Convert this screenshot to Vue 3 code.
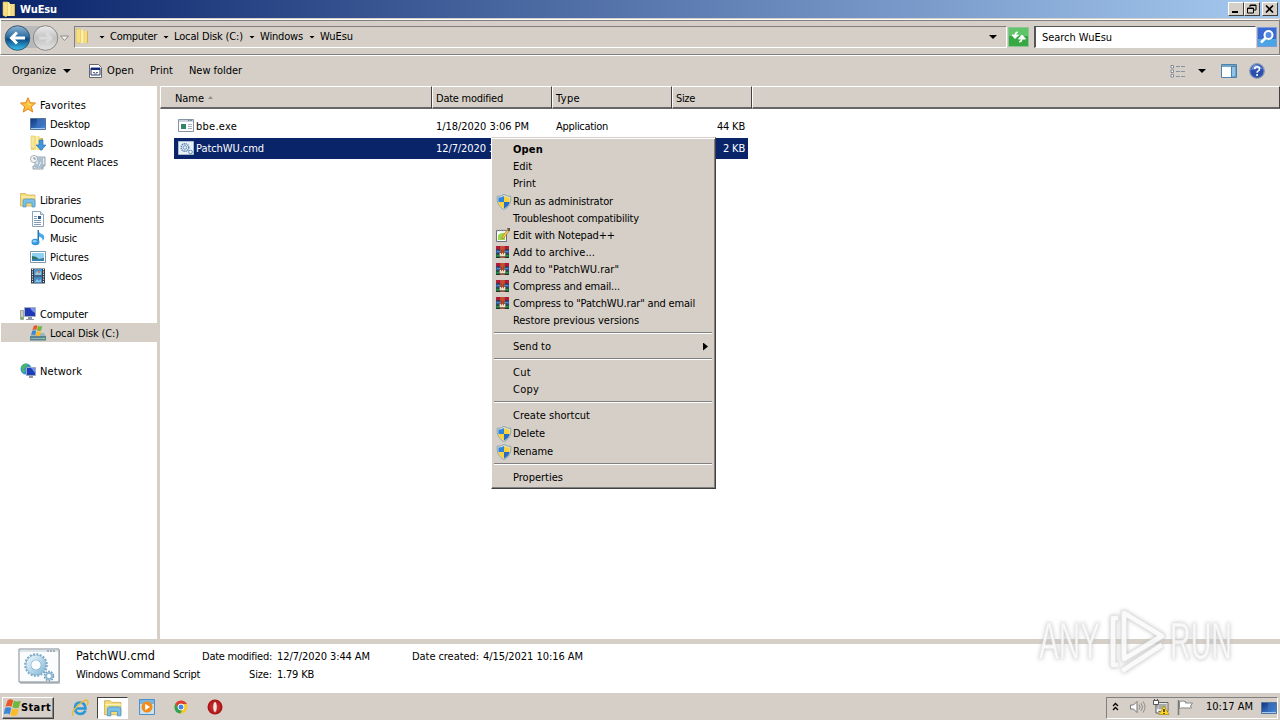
<script setup>
import { nextTick } from 'vue'

// Stretches or tightens a label so it occupies the given width.
const vFit = {
  mounted(el, { value }) {
    nextTick(() => {
      const n = el.textContent.length
      const w = el.getBoundingClientRect().width
      if (n > 1 && w) el.style.letterSpacing = (value - w) / n + 'px'
    })
  },
}

const crumbs = [
  ['Computer', 47], ['Local Disk (C:)', 69], ['Windows', 43], ['WuEsu', 33],
]
const tree = [
  { t: 'Favorites', w: 46, i: 'star' },
  { t: 'Desktop', w: 40, i: 'desktop', c: 1 },
  { t: 'Downloads', w: 53, i: 'down', c: 1 },
  { t: 'Recent Places', w: 68, i: 'recent', c: 1 },
  {},
  { t: 'Libraries', w: 41, i: 'lib' },
  { t: 'Documents', w: 54, i: 'doc', c: 1 },
  { t: 'Music', w: 27, i: 'music', c: 1 },
  { t: 'Pictures', w: 39, i: 'pic', c: 1 },
  { t: 'Videos', w: 32, i: 'video', c: 1 },
  {},
  { t: 'Computer', w: 48, i: 'pc' },
  { t: 'Local Disk (C:)', w: 69, i: 'disk', c: 1, sel: 1 },
  {},
  { t: 'Network', w: 42, i: 'net' },
]
const menu = [
  { t: 'Open', w: 30, b: 1 }, { t: 'Edit', w: 19 }, { t: 'Print', w: 23 },
  { t: 'Run as administrator', w: 100, i: 'shield', tall: 1 },
  { t: 'Troubleshoot compatibility', w: 126 },
  { t: 'Edit with Notepad++', w: 102, i: 'note' },
  { t: 'Add to archive...', w: 82, i: 'rar' },
  { t: 'Add to "PatchWU.rar"', w: 106, i: 'rar' },
  { t: 'Compress and email...', w: 107, i: 'rar' },
  { t: 'Compress to "PatchWU.rar" and email', w: 182, i: 'rar' },
  { t: 'Restore previous versions', w: 126 },
  {},
  { t: 'Send to', w: 38, sub: 1 },
  {},
  { t: 'Cut', w: 18 }, { t: 'Copy', w: 26 },
  {},
  { t: 'Create shortcut', w: 77 },
  { t: 'Delete', w: 32, i: 'shield', tall: 1 },
  { t: 'Rename', w: 40, i: 'shield', tall: 1 },
  {},
  { t: 'Properties', w: 50 },
]
</script>

<template>
  <div class="screen">
    <svg width="0" height="0" class="defs">
      <defs>
        <linearGradient id="gFold" x2="1"><stop offset="0" stop-color="#f0d070" /><stop offset=".5" stop-color="#fff3a8" /><stop offset="1" stop-color="#d8ac38" /></linearGradient>
        <linearGradient id="gBlue" x2="1" y2="1"><stop offset="0" stop-color="#10347c" /><stop offset="1" stop-color="#4a92e4" /></linearGradient>
        <linearGradient id="gBack" y2="1" x2="0"><stop offset="0" stop-color="#8db4d2" /><stop offset=".45" stop-color="#2d6ea4" /><stop offset=".55" stop-color="#0c4a86" /><stop offset="1" stop-color="#38c4f0" /></linearGradient>
        <linearGradient id="gFwd" y2="1" x2="0"><stop offset="0" stop-color="#ececec" /><stop offset=".5" stop-color="#c2c2c2" /><stop offset="1" stop-color="#e4e4e4" /></linearGradient>
        <linearGradient id="gGear" x2="1" y2="1"><stop offset="0" stop-color="#e3f2fa" /><stop offset="1" stop-color="#8ebedc" /></linearGradient>
        <radialGradient id="gRed"><stop offset="0" stop-color="#e84a42" /><stop offset="1" stop-color="#a80c10" /></radialGradient>
      </defs>
      <symbol id="folder" viewBox="0 0 16 16"><path d="M2 1h6l1 2h5v12H2z" fill="url(#gFold)" /><path d="M2 1h5v12l-2 3-3-2z" fill="#f6df83" stroke="#d9b850" stroke-width=".6" /><path d="M8 2v12M12 3v12" stroke="#fff6bd" /></symbol>
      <symbol id="star" viewBox="0 0 16 16"><path d="M8 .7l2.1 5 5.4.4-4.1 3.5 1.3 5.4L8 12l-4.7 3 1.3-5.4L.5 6.1l5.4-.4z" fill="#fcc23c" stroke="#e8801c" /><path d="M8 3.3L9.3 7l3 .2-4 1z" fill="#ffe48a" /></symbol>
      <symbol id="desktop" viewBox="0 0 16 16"><path d="M.5 2.500h15v11H.5z" fill="url(#gBlue)" stroke="#58749c" /><path d="M1 12.500h14" stroke="#9fc8f4" /><path d="M7 3h8v4q-5 0-8 4z" fill="#4a7cc8" opacity=".5" /></symbol>
      <symbol id="down" viewBox="0 0 16 16"><path d="M1 1h8l1 2h3v12H1z" fill="url(#gFold)" /><path d="M1 1h4v13l-4-1z" fill="#f8e69a" stroke="#d9b850" stroke-width=".5" /><path d="M9 5h4v5h3l-5 5.500-5-5.500h3z" fill="#3c96e0" stroke="#2670b0" stroke-width=".6" /></symbol>
      <symbol id="recent" viewBox="0 0 16 16"><path d="M5 3h10v9h-2v3H3v-3h2z" fill="#dfe8ee" stroke="#7d8b98" stroke-width=".8" /><path d="M8 5h5M8 7h5M8 9h2m1 0h2M6 11h3m1 0h4M5 13h8" stroke="#7898b4" /><circle cx="4" cy="5" r="3.600" fill="#edf3f7" stroke="#8c98a4" stroke-width=".7" /><path d="M4 3v2h2" fill="none" stroke="#666" stroke-width=".7" /></symbol>
      <symbol id="lib" viewBox="0 0 16 16"><path d="M.5 3V1.500h5L7 3h8v11H.5z" fill="#f5dc78" stroke="#c9a848" stroke-width=".7" /><path d="M1 5h14" stroke="#fff6c0" /><path d="M3 15V9q0-2 2-2h8q2 0 2 2v6h-3v-4H6v4z" fill="#79bfe8" stroke="#4a92c4" stroke-width=".7" /></symbol>
      <symbol id="doc" viewBox="0 0 16 16"><path d="M2.500.5h8l3 3v12h-11z" fill="#fff" stroke="#8ca4b8" /><path d="M10.500.5v3h3" fill="#d9e8f2" stroke="#8ca4b8" /><path d="M4 5.500h3M4 7.500h3M4 9.500h7M4 11.500h7M4 13.500h7" stroke="#829ab4" /><path d="M8 5h3v3H8z" fill="#315b94" /></symbol>
      <symbol id="music" viewBox="0 0 16 16"><path d="M8 0q1 3 4 4t2 5l-1.500 2q.5-4-4.500-4.500" fill="#4cabe8" /><path d="M7.500 0H9v12H7.500z" fill="#2676b8" /><ellipse cx="5.500" cy="12" rx="4" ry="3.300" fill="#3296dc" /><ellipse cx="4.700" cy="11.200" rx="2" ry="1.200" fill="#8fd2f8" /></symbol>
      <symbol id="pic" viewBox="0 0 16 16"><path d="M.5 2.500h15v11H.5z" fill="#fff" stroke="#8196a8" /><path d="M2 4h12v8H2z" fill="#8fd0f4" /><path d="M2 7q4 0 7 3l5-1v3H2z" fill="#2d7562" /><path d="M2 10h12v2H2z" fill="#3480b0" /></symbol>
      <symbol id="video" viewBox="0 0 16 16"><path d="M1 .5h14v15H1z" fill="#34404c" /><path d="M4 1h8v6.500H4z" fill="#4e94cc" /><path d="M4 8.500h8V15H4z" fill="#4788c0" /><path d="M5 6l2-3 2 2 2-2v4H5zM5 14l2-3 2 2 2-2v3z" fill="#8fc6e4" /><path d="M8 3h2v2H8z" fill="#d47854" /><path d="M2.500 1v14M13.500 1v14" stroke="#e2e8ee" stroke-dasharray="1.200 1.200" /></symbol>
      <symbol id="pc" viewBox="0 0 16 16"><path d="M.5 4.500h3v9h-3z" fill="#c4ceca" stroke="#8a968c" stroke-width=".8" /><path d="M1 11h2v2H1z" fill="#72b848" /><path d="M4.500 1.500h11v9h-11z" fill="#2038b8" stroke="#a8b0c0" /><path d="M10 2h5v5q-3-1-5-5z" fill="#7490ec" /><path d="M8 11h4v2h2v1H6v-1h2z" fill="#8d98a4" /></symbol>
      <symbol id="flag" viewBox="0 0 12 12"><path d="M2.500 1q2-1.500 4 0L5.300 5.500q-2-1-4.300 0z" fill="#ea5826" /><path d="M7 1.200q2 1 4.800 0L10.500 6Q8 7 6 5.800z" fill="#6eb83c" /><path d="M.8 6.300q2-1 4.300 0L4 11q-2-1.500-4.300 0z" fill="#3c86da" /><path d="M5.700 6.600q2 1.200 4.700.2L9.200 11.500q-2 1-4.700-.2z" fill="#fcbc28" /></symbol>
      <symbol id="disk" viewBox="0 0 16 16"><path d="M2 8h12l2 4v3H0v-3z" fill="#9db4be" /><path d="M0 11h16v4.500H0z" fill="#5b8390" /><path d="M1 13.500h13" stroke="#90b4bc" /><path d="M13 13h2v1h-2z" fill="#6f6" /><use href="#flag" x="1" y="0" width="12" height="11" /></symbol>
      <symbol id="net" viewBox="0 0 16 16"><circle cx="6" cy="6" r="5.500" fill="#3290d0" /><path d="M1 4q3-5 7-3L6 4 4 5l1 3-2 2zM8 3l3 2-2 2z" fill="#48b864" /><path d="M6.500 4.500h9v8h-9z" fill="#1c3cb8" stroke="#9aa8bc" /><path d="M11 5h4v5z" fill="#7094ec" /><path d="M9 13h4v2H9z" fill="#8d98a4" /></symbol>
      <symbol id="shield" viewBox="0 0 16 16"><path d="M8 .5q3 2 6.800 1.800 1 9.500-6.800 13.300Q.2 11.800 1.200 2.300 5 2.500 8 .5z" fill="#dbe8ee" stroke="#879ba6" stroke-width=".9" /><path d="M8 1.900Q5.500 3.500 2.400 3.500V8H8z" fill="#2d84d8" /><path d="M8 1.900q2.500 1.600 5.600 1.600V8H8z" fill="#f8d23c" /><path d="M2.400 8H8v6.400Q3.100 12.100 2.400 8z" fill="#f8d23c" /><path d="M13.600 8H8v6.400Q12.900 12.100 13.600 8z" fill="#2d6cc0" /></symbol>
      <symbol id="note" viewBox="0 0 14 14"><path d="M.5 2.500h10v11H.5z" fill="#fff" stroke="#687078" /><path d="M2 7q4-3 7-2v7H2z" fill="#9ed848" /><path d="M1 2.500h9" stroke="#889" stroke-dasharray="1 1" stroke-width="1.500" /><path d="M6 9l5-7 2 1-5 7-2 1z" fill="#f4c84c" stroke="#8a6020" stroke-width=".5" /><path d="M11 0h3v3h-2z" fill="#685848" /></symbol>
      <symbol id="rar" viewBox="0 0 14 13"><path d="M0 0h14v4H0z" fill="#b01838" /><path d="M0 4h14v4.500H0z" fill="#2858a4" /><path d="M0 8.500h14V13H0z" fill="#107038" /><path d="M0 4h14M0 8.500h14M0 12.500h14" stroke="#202020" stroke-width=".8" /><path d="M1 6h12" stroke="#5898d0" /><path d="M1 10.500h12" stroke="#38a858" /><path d="M4.500 0h5v13h-5z" fill="#c05030" /><path d="M3.500 7h7v4.500h-7z" fill="#ece0c8" stroke="#444" stroke-width=".7" /><path d="M5.500 4h1v5h-1zM7.500 4h1v5h-1z" fill="#b03818" /></symbol>
      <symbol id="gears" viewBox="0 0 40 34"><circle cx="17" cy="15" r="10.500" fill="none" stroke="#7ba9c6" stroke-width="2.600" stroke-dasharray="2 1.300" /><circle cx="17" cy="15" r="7.500" fill="none" stroke="#7ba9c6" stroke-width="5.500" /><circle cx="17" cy="15" r="7.500" fill="none" stroke="url(#gGear)" stroke-width="4.500" /><circle cx="30" cy="26" r="4.300" fill="none" stroke="#6c98b8" stroke-width="2" stroke-dasharray="1.600 1.100" /><circle cx="30" cy="26" r="3" fill="#fff" stroke="#92bbd4" stroke-width="2" /></symbol>
    </svg>

    <header class="title">
      <svg class="i16"><use href="#folder" /></svg>
      <b v-fit="37">WuEsu</b>
      <div class="winbtns">
        <i class="wb"><svg width="12" height="10"><path d="M2 8h6" stroke="#000" stroke-width="2" /></svg></i>
        <i class="wb"><svg width="12" height="10"><path d="M4 3V1h6v5H8M4 1.500h6M1.500 4v5h6V4zM1 4.500h7" fill="none" stroke="#000" /></svg></i>
        <i class="wb gap"><svg width="12" height="10"><path d="M2 1.500l7 7M9 1.500l-7 7" stroke="#000" stroke-width="1.700" /></svg></i>
      </div>
    </header>

    <nav class="nav">
      <svg class="arrows" width="70" height="30" viewBox="0 0 70 30">
        <path d="M16 3h30v22H16z" fill="#b7b9ba" />
        <circle cx="17.500" cy="15" r="12.300" fill="url(#gBack)" stroke="#3c5870" />
        <path d="M25 15H12M17 9.500L11.500 15l5.500 5.500" fill="none" stroke="#fff" stroke-width="3" />
        <circle cx="45.500" cy="15" r="12.300" fill="url(#gFwd)" stroke="#888" />
        <path d="M39 15h11M46 10l5 5-5 5" fill="none" stroke="#dadada" stroke-width="3" />
        <path d="M60.500 13h8L64.500 17.500z" fill="#f0efed" stroke="#8b8b88" />
      </svg>
      <div class="addr">
        <svg class="i16"><use href="#folder" /></svg>
        <template v-for="c in crumbs" :key="c[0]"><i class="tri" /><span v-fit="c[1]">{{ c[0] }}</span></template>
        <i class="tri big end" />
      </div>
      <svg class="refresh" width="21" height="20"><path d="M.5.5h20v19H.5z" fill="#38a844" stroke="#8fc49a" /><path d="M1 1h19v8H1z" fill="#60c468" /><path d="M10 5Q7 4.500 7 7.500V9M4 8l3 3.500L10.500 8zM11 15q3 .5 3-2.500V11M10.500 12L14 8l3.500 4z" fill="#fff" stroke="#fff" stroke-width="1" /></svg>
      <div class="search"><span v-fit="70">Search WuEsu</span></div>
      <svg class="mag" width="20" height="20"><path d="M.5.5h19v19H.5z" fill="#3a69d4" stroke="#7d9ad8" /><path d="M1 12h18v7H1z" fill="#4aa4e6" /><circle cx="11.500" cy="8" r="4" fill="#568be4" stroke="#fff" stroke-width="2" /><path d="M8.500 11L4 15.500" stroke="#fff" stroke-width="2.500" /></svg>
    </nav>

    <div class="tools">
      <span v-fit="44" class="t1">Organize</span><i class="tri big t2" />
      <svg class="t3" width="15" height="16"><path d="M1.500 1.500h9l3 3v10h-12z" fill="#fff" stroke="#666" /><path d="M3 5h9v7H3z" fill="#fff" stroke="#223a80" /><path d="M3 6h9" stroke="#102880" stroke-width="2" /><path d="M5 9.500h2M8 9.500h2M6 11h3" stroke="#667" /></svg>
      <span v-fit="27" class="t4">Open</span><span v-fit="23" class="t5">Print</span><span v-fit="53">New folder</span>
      <svg class="v1" width="16" height="13"><g fill="#fff" stroke="#777f90" stroke-width=".9"><path d="M1 .5h2.500V3H1zM1 5h2.500v2.500H1zM1 9.500h2.500V12H1z" /></g><path d="M6 1.500h9M6 6.500h9M6 11.500h9" stroke="#8a91a4" stroke-dasharray="4 1" /></svg>
      <i class="tri big v2" />
      <svg class="v3" width="16" height="14"><path d="M.5.5h15v13H.5z" fill="#fff" stroke="#4d81ac" /><path d="M1 2h14" stroke="#74a6cc" stroke-width="2" /><path d="M10.500 2.500h4.500V13h-4.500z" fill="#8dc4ea" stroke="#4d81ac" /></svg>
      <svg class="v4" width="16" height="16"><circle cx="8" cy="8" r="7.300" fill="#2a4fae" stroke="#8c98b8" stroke-width="1.300" /><path d="M2 7q2-6 6-5t6 4q-7-1-12 1z" fill="#6c92dc" /><path d="M5.700 6.200q0-2.400 2.400-2.400t2.400 2.100q0 1.300-1.300 2-1.100.6-1.100 1.900M8.100 11v2" fill="none" stroke="#fff" stroke-width="1.600" /></svg>
    </div>

    <main class="main">
      <aside class="tree">
        <div v-for="(n, k) in tree" :key="k" class="node" :class="{ child: n.c, sel: n.sel }">
          <template v-if="n.t"><svg class="i16"><use :href="'#' + n.i" /></svg><span v-fit="n.w">{{ n.t }}</span></template>
        </div>
      </aside>
      <section class="files">
        <div class="heads">
          <div class="h hn"><span v-fit="29">Name</span><i class="up" /></div>
          <div class="h hd"><span v-fit="67">Date modified</span></div>
          <div class="h ht"><span v-fit="24">Type</span></div>
          <div class="h hs"><span v-fit="19">Size</span></div>
          <div class="h hr" />
        </div>
        <div class="row">
          <svg class="i16" viewBox="0 0 16 16"><path d="M.5 1.500h15v12H.5z" fill="#fff" stroke="#8494a4" /><path d="M1 3h14" stroke="#cbd5df" stroke-width="2" /><path d="M10 2.500h4" stroke="#65788c" stroke-dasharray="1 .6" /><path d="M3 6h5v5H3z" fill="#338468" /><path d="M10 6.500h4M10 8.500h4M10 10.500h4" stroke="#a4b2bf" /></svg>
          <div class="cn"><span v-fit="41">bbe.exe</span></div><div class="cd"><span v-fit="93">1/18/2020 3:06 PM</span></div><div class="ct"><span v-fit="52">Application</span></div><div class="cs"><span v-fit="28">44 KB</span></div>
        </div>
        <div class="row on">
          <svg class="i16" viewBox="0 0 16 16"><path d="M.5 1.500h15v13H.5z" fill="#e8f1f8" stroke="#a9bdd0" /><circle cx="7" cy="7.500" r="3.800" fill="none" stroke="#5f87b4" stroke-width="1.500" stroke-dasharray="1.400 .6" /><circle cx="7" cy="7.500" r="1.800" fill="none" stroke="#6f94bc" /><circle cx="12.500" cy="12" r="1.800" fill="#fff" stroke="#5f87b4" /></svg>
          <div class="cn"><span v-fit="68">PatchWU.cmd</span></div><div class="cd"><span v-fit="93">12/7/2020 3:44 AM</span></div><div class="ct" /><div class="cs"><span v-fit="22">2 KB</span></div>
        </div>
      </section>
    </main>

    <footer class="details">
      <svg class="thumb" width="43" height="37" viewBox="0 0 43 37"><path d="M2 2h40v34H2z" fill="#c4c8cb" /><path d="M1 1h40v33H1z" fill="#fafcfd" stroke="#808b93" /><path d="M2 2h38v2H2z" fill="#dbe4e9" /><path d="M29 3h9" stroke="#778" stroke-dasharray="2 1" /><use href="#gears" x="1" y="2" width="40" height="34" /></svg>
      <div class="dname"><span v-fit="79" class="lg">PatchWU.cmd</span><span v-fit="124">Windows Command Script</span></div>
      <div class="dk"><span v-fit="70">Date modified:</span><span v-fit="23">Size:</span></div>
      <div class="dv"><span v-fit="93">12/7/2020 3:44 AM</span><span v-fit="37">1.79 KB</span></div>
      <div class="dk2"><span v-fit="67">Date created:</span></div>
      <div><span v-fit="100">4/15/2021 10:16 AM</span></div>
    </footer>

    <div class="task">
      <div class="start"><svg width="17" height="17" viewBox="0 0 12 12"><use href="#flag" width="12" height="12" /></svg><b v-fit="30">Start</b></div>
      <svg class="q1" width="18" height="18" viewBox="0 0 18 18"><path d="M14.500 11.500Q13 15 9 15q-5-.5-5-6t5-5.500q5 0 5.500 6H4.500" fill="none" stroke="#2898dc" stroke-width="2.600" /><path d="M2.500 16.500Q-1 14 7 6.500t9.500-4.500q1.500 1-.5 4" fill="none" stroke="#e8bc38" stroke-width="1.500" /></svg>
      <div class="active"><svg width="18" height="18"><use href="#lib" /></svg></div>
      <svg class="q3" width="16" height="16"><path d="M.5.500h15v15H.5z" fill="#c8e2f4" stroke="#4d91c8" /><path d="M1 1h14v4H1z" fill="#7ab4e0" /><circle cx="8" cy="8" r="5.500" fill="#f48a18" /><path d="M6.200 4.800L11 8l-4.800 3.200z" fill="#fff" /></svg>
      <svg class="q4" width="14" height="14" viewBox="0 0 14 14"><circle cx="7" cy="7" r="6.500" fill="#f8c828" /><path d="M1.300 3.500Q3.500.4 7 .5q4.200 0 5.900 3.500H7L4 8z" fill="#dc4034" /><path d="M1.300 3.500L5 9l3 1.500-1.500 3Q1 13 .5 8 .3 5 1.300 3.500z" fill="#34a050" /><circle cx="7" cy="7" r="3" fill="#4484e4" stroke="#fff" /></svg>
      <svg class="q5" width="16" height="16"><circle cx="8" cy="8" r="7.500" fill="url(#gRed)" /><ellipse cx="8" cy="8" rx="2.200" ry="5.500" fill="#f4e4e2" stroke="#88080c" stroke-width=".6" /></svg>
      <div class="tray">
        <svg class="y1" width="7" height="9"><path d="M1 4l2.500-2.500L6 4M1 8l2.500-2.500L6 8" fill="none" stroke="#000" stroke-width="1.300" /></svg>
        <svg class="y2" width="17" height="14"><path d="M1.500 5h3L8 1.500v11L4.500 9h-3z" fill="#fff" stroke="#777" /><path d="M10 4.500q2 2.500 0 5M12 3q3 4 0 8M14 1.500q4 5.500 0 11" fill="none" stroke="#888" stroke-width=".9" /></svg>
        <svg class="y3" width="17" height="17"><path d="M4 3.500h11v9H4z" fill="#e6e6e2" stroke="#666" /><path d="M5.500 5h8v5h-8z" fill="#a7aaa6" /><path d="M.5 1.500h5v4h-5zM1.500 0v2M4.500 0v2M3 6v8h3" fill="#fff" stroke="#555" /><path d="M11 7l5 8.500H6z" fill="#ffd820" stroke="#a88a00" stroke-width=".7" /><path d="M11 10v3M11 14v1" stroke="#000" stroke-width="1.200" /></svg>
        <svg class="y4" width="17" height="15"><path d="M1.500 0v15" stroke="#777" stroke-width="1.500" /><path d="M2.500 1.500q3-1 6 0v1.500h7l-2 3 1 2H8V8Q5 7.500 2.500 8.500z" fill="#fff" stroke="#888" /></svg>
        <span v-fit="47" class="clock">10:17 AM</span>
        <svg class="i16"><use href="#desktop" /></svg>
      </div>
    </div>

    <div class="ctx">
      <template v-for="(m, k) in menu" :key="k">
        <div v-if="m.t" class="mi" :class="{ tall: m.tall, bold: m.b }">
          <div class="mic"><svg v-if="m.i" :class="m.i"><use :href="'#' + m.i" /></svg></div>
          <span v-fit="m.w">{{ m.t }}</span><i v-if="m.sub" class="sub" />
        </div>
        <hr v-else>
      </template>
    </div>

    <svg class="mark" width="204" height="76" viewBox="0 0 204 76">
      <g class="brand">
        <text x="5" y="56" textLength="61" lengthAdjust="spacingAndGlyphs">ANY</text>
        <text x="136" y="56" textLength="62" lengthAdjust="spacingAndGlyphs">RUN</text>
      </g>
      <g class="play">
        <path d="M90 10L128 33 90 56zM84 15h-5v47h5M88 68l40-26" class="rim" />
        <path d="M90 10L128 33 90 56zM84 15h-5v47h5M88 68l40-26" />
      </g>
    </svg>
  </div>
</template>

<style>
html, body { margin: 0; overflow: hidden; }
</style>
<style scoped>
* { box-sizing: border-box; }
.screen { position: relative; width: 1280px; height: 720px; overflow: hidden; display: flex; flex-direction: column; background: #d5cfc7; color: #000; font: 11px/14px "DejaVu Sans Condensed", "DejaVu Sans", sans-serif; white-space: nowrap; }
.defs { position: absolute; }
svg { flex: none; display: block; }
span, b { display: inline-block; flex: none; }
.i16 { width: 16px; height: 16px; }
.title { height: 18px; flex: none; display: flex; align-items: center; padding-left: 1px; background: linear-gradient(90deg, #0a246a, #a6caf0); color: #fff; }
.title b { margin: 1px 0 0 3px; }
.winbtns { margin: 0 2px 0 auto; display: flex; }
.wb { width: 16px; height: 14px; background: #d5cfc7; border: 1px solid; border-color: #fff #404040 #404040 #fff; padding: 1px; }
.gap { margin-left: 2px; }
.nav { height: 36px; flex: none; display: flex; align-items: center; margin-top: 1px; border: 1px solid #808080; border-top-color: #fff; border-left-color: #fff; box-shadow: inset 0 1px #808080; }
.arrows { margin: 1px 0 0 -1px; }
.addr { width: 933px; height: 22px; margin-left: 4px; border: 1px solid #808080; border-right-color: #fff; border-bottom-color: #fff; display: flex; align-items: center; }
.addr .i16 { margin: -2px 0 0 -1px; }
.addr .tri { margin: 0 5px 0 6px; }
.addr .i16 + .tri { margin-left: 9px; }
.addr .tri.end { margin: 0 9px 0 auto; }
.tri { width: 6px; height: 3px; flex: none; background: #000; clip-path: polygon(0 0, 100% 0, 50% 100%); }
.big { width: 8px; height: 4px; }
.refresh { margin-left: 1px; }
.search { width: 222px; height: 22px; margin-left: 5px; background: #fff; border: 1px solid #fff; border-top-color: #555; border-left: 2px solid #555; padding: 4px 0 0 6px; }
.mag { margin-left: 1px; }
.tools { height: 31px; flex: none; display: flex; align-items: center; padding: 0 15px 0 12px; border-top: 1px solid #fff; }
.t2 { margin-left: 7px; }
.t3 { margin: -1px 0 0 17px; }
.t4 { margin-left: 4px; }
.t5 { margin: 0 16px; }
.v1 { margin-left: auto; }
.v2 { margin: 0 15px 0 12px; }
.v3 { margin-top: -1px; }
.v4 { margin-left: 12px; margin-top: -1px; }
.main { height: 553px; flex: none; display: flex; background: #fff; }
.tree { width: 160px; flex: none; padding-top: 9px; background: linear-gradient(90deg, transparent 157px, #d5cfc7 157px); }
.node { height: 19px; display: flex; align-items: center; gap: 4px; padding-left: 20px; }
.node span { padding-top: 2px; }
.node.child { margin-left: 1px; padding-left: 29px; }
.node.sel { background: #d5cfc7; }
.files { flex: 1; }
.heads { height: 23px; display: flex; background: #d5cfc7; margin-bottom: 7px; }
.h { padding: 5px 0 0 3px; border: 1px solid #fff; border-right-color: #404040; border-bottom: 2px solid #666; display: flex; height: 23px; }
.hn { width: 272px; padding-left: 14px; }
.hd { width: 120px; }
.ht { width: 120px; }
.hs { width: 80px; }
.hr { flex: 1; }
.up { width: 5px; height: 3px; margin: 4px 0 0 4px; background: #929087; clip-path: polygon(50% 0, 100% 100%, 0 100%); }
.row { width: 574px; height: 22px; margin-left: 14px; padding: 0 3px 0 4px; display: flex; align-items: center; background: #fff; }
.row .i16 { margin-top: -2px; }
.row.on { background: #0a246a; color: #fff; height: 21px; }
.cn { width: 240px; margin-left: 2px; }
.cd { width: 120px; }
.ct { width: 120px; }
.cs { margin-left: auto; }
.details { height: 53px; flex: none; display: flex; background: #fff; border-top: 5px solid #d5cfc7; padding-top: 4px; line-height: 18px; }
.details > div { display: flex; flex-direction: column; align-items: flex-start; }
.thumb { margin: 0 0 0 18px; }
.dname { margin-left: 15px; width: 126px; }
.details .lg { font-size: 12.5px; margin-top: -1px; padding-bottom: 1px; }
.details .dk { width: 70px; align-items: flex-end; }
.dv { margin-left: 5px; width: 135px; }
.dk2 { width: 71px; }
.task { height: 28px; flex: none; display: flex; align-items: center; border-top: 1px solid #fff; padding: 2px 2px 0; }
.start { width: 52px; height: 22px; display: flex; align-items: center; padding-left: 1px; border: 1px solid; border-color: #fff #404040 #404040 #fff; box-shadow: inset -1px -1px #888; }
.q1 { margin-left: 17px; }
.active { width: 31px; height: 22px; margin-left: 8px; display: flex; align-items: center; justify-content: center; background: #fff; border: 1px solid; border-color: #404040 #fff #fff #404040; }
.q3 { margin: -1px 0 0 11px; }
.q4 { margin: -1px 0 0 19px; }
.q5 { margin: -1px 0 0 19px; }
.tray { width: 172px; height: 22px; margin-left: auto; display: flex; align-items: center; padding-left: 5px; border: 1px solid; border-color: #808080 #fff #fff #808080; }
.y1, .y2 { margin-top: -2px; }
.y2 { margin-left: 10px; }
.y3 { margin-left: 7px; }
.y4 { margin-left: 7px; }
.clock { margin: -1px 8px 0 12px; }
.ctx { position: absolute; left: 491px; top: 137px; width: 225px; height: 352px; padding: 3px 3px 0 2px; background: #d5cfc7; border: 1px solid; border-color: #d5cfc7 #404040 #404040 #fff; box-shadow: inset 0 1px #fff, inset -1px -1px #808080; }
.mi { height: 17px; display: flex; align-items: center; }
.mi.tall { height: 18px; padding-top: 1px; }
.mi.bold { font-weight: bold; }
.mic { width: 19px; display: flex; justify-content: center; }
.shield { width: 16px; height: 16px; }
.note { width: 14px; height: 14px; margin: -1px 2px 0 0; }
.rar { width: 13px; height: 12px; margin: -1px 2px 0 0; }
.sub { width: 5px; height: 8px; margin: 0 4px 0 auto; background: #000; clip-path: polygon(0 0, 100% 50%, 0 100%); }
hr { margin: 3px 0 4px; border: 0; border-top: 1px solid #808080; border-bottom: 1px solid #fff; }
.mark { position: absolute; left: 1034px; top: 603px; opacity: .9; filter: drop-shadow(0 0 2px #bbb); }
.brand { font: 51px "Liberation Sans", Arial, sans-serif; fill: #f9f9f9; stroke: #e4e4e4; stroke-width: .6; }
.play path { fill: none; stroke: #fafafa; stroke-width: 4.5; stroke-linejoin: round; }
.play .rim { stroke: #dedede; stroke-width: 6; }
</style>
